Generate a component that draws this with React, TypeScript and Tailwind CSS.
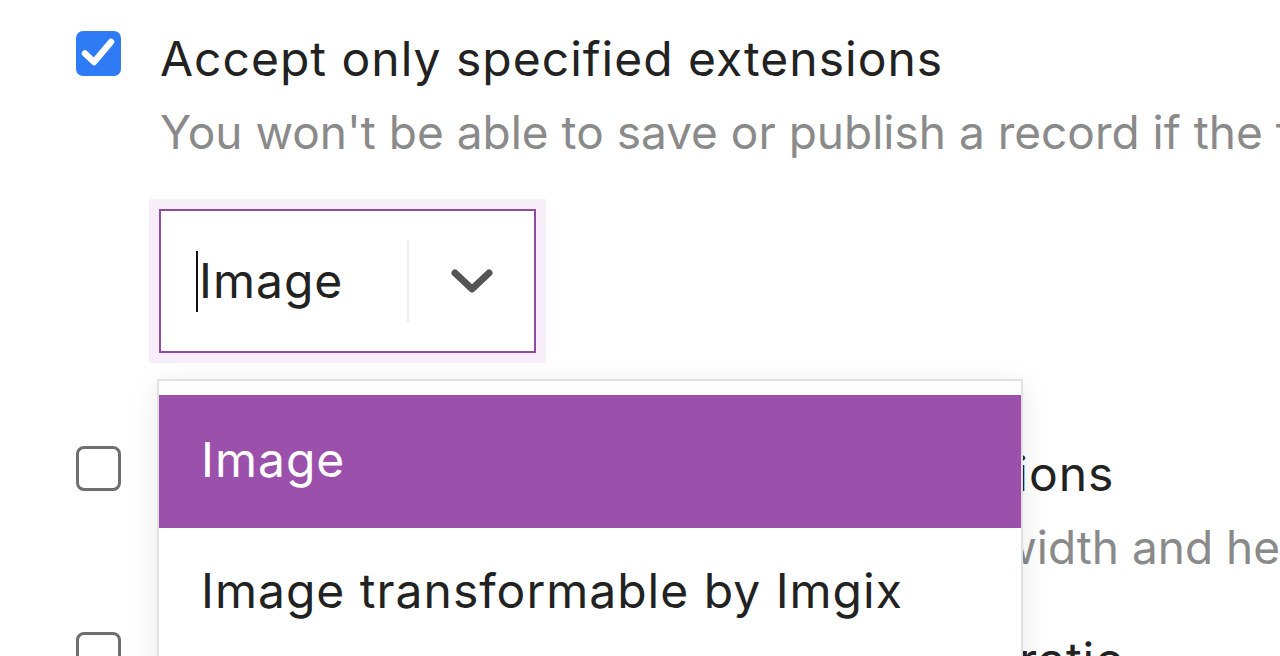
import React from 'react';

type Row = { title: string; hint: string; checked: boolean };

const ROWS: Row[] = [
  {
    title: 'Accept only specified extensions',
    hint: "You won't be able to save or publish a record if the file extension is not one of the allowed ones",
    checked: true,
  },
  {
    title: 'Accept only specified image dimensions',
    hint: "You won't be able to save if the image width and height are not within the range",
    checked: false,
  },
  {
    title: 'Accept only specified image aspect ratio',
    hint: "You won't be able to save or publish a record if the image aspect ratio does not match",
    checked: false,
  },
];

function Box({ checked }: { checked: boolean }) {
  if (checked) {
    return (
      <div className="w-[45px] h-[45px] shrink-0 rounded-[7px] bg-[#2f7bf5] flex items-center justify-center">
        <svg width="45" height="45" viewBox="0 0 45 45">
          <path d="M9 22.5 L18 31 L35 11" fill="none" stroke="#fff" strokeWidth="6.5" strokeLinecap="round" strokeLinejoin="round" />
        </svg>
      </div>
    );
  }
  return <div className="w-[45px] h-[45px] shrink-0 rounded-[8px] border-[3px] border-[#6e6e6e] bg-white" />;
}

export default function App() {
  return (
    <div className="relative w-[1280px] h-[656px] overflow-hidden bg-white font-['Inter','Liberation_Sans',sans-serif] tracking-[1px]">
      <div className="pl-[76px] pt-[31px] flex flex-col gap-[57px]">
        {ROWS.map((r, i) => (
          <div key={i} className="flex items-start gap-[39px]">
            <Box checked={r.checked} />
            <div className="flex flex-col whitespace-nowrap">
              <div className="text-[48px] leading-[56px] text-[#222222]">{r.title}</div>
              <div className="mt-[17px] text-[46px] leading-[56px] tracking-normal text-[#8a8a8a]">{r.hint}</div>
              {i === 0 && (
                <div className="mt-[49px] mb-[36px] -ml-[1px] w-[377px] h-[144px] border-2 border-[#8f4b9f] ring-[10px] ring-[#f8eefa] bg-white flex items-center">
                  <div className="flex-1 flex items-center pl-[35px]">
                    <span className="w-[2px] h-[61px] bg-[#111] mr-[1px]" />
                    <span className="text-[48px] leading-[56px] text-[#222222]">Image</span>
                  </div>
                  <div className="w-[2px] h-[82px] bg-[#eeeeee]" />
                  <div className="w-[125px] flex items-center justify-center">
                    <svg width="44" height="28" viewBox="0 0 44 28">
                      <path d="M5 6 L22 22 L39 6" fill="none" stroke="#555" strokeWidth="7" strokeLinecap="round" strokeLinejoin="round" />
                    </svg>
                  </div>
                </div>
              )}
            </div>
          </div>
        ))}
      </div>

      {/* open menu */}
      <div className="absolute left-[157px] top-[379px] w-[866px] bg-white border-2 border-[#e1e1e1] pt-[14px] shadow-[0_6px_28px_rgba(0,0,0,0.09)]">
        <div className="h-[133px] bg-[#9b51ab] flex items-center pl-[42px] pb-[4px] text-[48px] text-white">Image</div>
        <div className="h-[133px] flex items-center pl-[42px] pb-[8px] text-[48px] text-[#222222]">Image transformable by Imgix</div>
        <div className="h-[133px] flex items-center pl-[42px] text-[48px] text-[#222222]">Other</div>
      </div>
    </div>
  );
}
